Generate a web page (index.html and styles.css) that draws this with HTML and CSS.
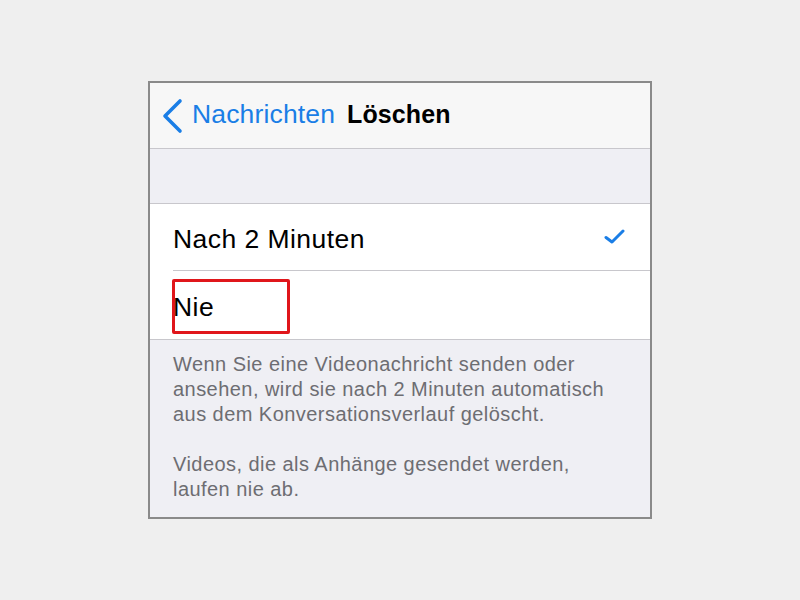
FILE: index.html
```html
<!DOCTYPE html>
<html lang="de">
<head>
<meta charset="utf-8">
<link rel="stylesheet" href="styles.css">
</head>
<body>
<div class="frame">
  <div class="navbar">
    <svg class="chevron" width="24" height="36" viewBox="0 0 24 36"><path d="M19 3 L4 18 L19 33" fill="none" stroke="#1a7ee6" stroke-width="3.6" stroke-linecap="round" stroke-linejoin="round"/></svg>
    <span class="back">Nachrichten</span>
    <span class="title">Löschen</span>
  </div>
  <div class="spacer"></div>
  <div class="list">
    <div class="row first">
      <span class="label">Nach 2 Minuten</span>
      <svg class="check" width="22" height="16" viewBox="0 0 22 16"><path d="M2 8.5 L8 13 L19 2" fill="none" stroke="#1a7ee6" stroke-width="3" stroke-linecap="round" stroke-linejoin="round"/></svg>
    </div>
    <div class="row last">
      <span class="label">Nie</span>
      <div class="highlight"></div>
    </div>
  </div>
  <div class="footer">
    <p>Wenn Sie eine Videonachricht senden oder ansehen, wird sie nach 2 Minuten automatisch aus dem Konversationsverlauf gelöscht.</p>
    <p>Videos, die als Anhänge gesendet werden, laufen nie ab.</p>
  </div>
</div>
</body>
</html>
```

FILE: styles.css
```css
html, body {
  margin: 0;
  padding: 0;
  background: #efefef;
}
body {
  font-family: "Liberation Sans", Arial, sans-serif;
}
.frame {
  margin: 81px 0 0 148px;
  width: 500px;
  border: 2px solid #8a8a8a;
  background: #efeff4;
}
.navbar {
  height: 65px;
  background: #f7f7f7;
  border-bottom: 1px solid #c8c7cc;
  display: flex;
  align-items: center;
  padding-left: 11px;
}
.chevron {
  display: block;
}
.back {
  color: #1a7ee6;
  font-size: 26.5px;
  margin-left: 7px;
  letter-spacing: 0.15px;
  margin-top: -2px;
}
.title {
  color: #000;
  font-weight: bold;
  font-size: 25px;
  margin-left: 12px;
  letter-spacing: 0.1px;
  margin-top: -2px;
}
.spacer {
  height: 54px;
  border-bottom: 1px solid #c8c7cc;
}
.list {
  background: #fff;
  border-bottom: 1px solid #c8c7cc;
}
.row {
  position: relative;
  display: flex;
  align-items: center;
  justify-content: space-between;
  margin-left: 23px;
  padding-right: 24px;
  font-size: 26.5px;
  color: #000;
}
.row.first {
  height: 66px;
  border-bottom: 1px solid #c8c7cc;
}
.row.last {
  height: 68px;
}
.label {
  letter-spacing: 0.45px;
  padding-top: 4px;
}
.check {
  display: block;
  margin-top: 0;
}
.highlight {
  position: absolute;
  left: -1px;
  top: 8px;
  width: 112px;
  height: 49px;
  border: 3px solid #e0161b;
  border-radius: 2px;
}
.footer {
  padding: 12px 36px 15px 23px;
  color: #6d6d72;
  font-size: 20px;
  line-height: 25px;
  letter-spacing: 0.45px;
}
.footer p {
  margin: 0 0 25px 0;
}
.footer p:last-child {
  margin-bottom: 0;
}
```
